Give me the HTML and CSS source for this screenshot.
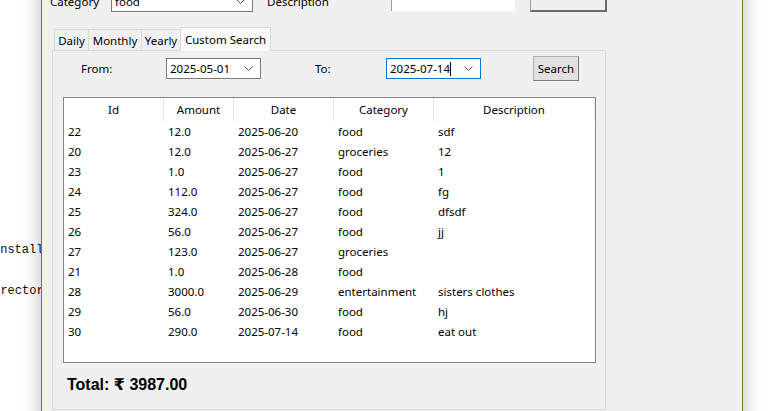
FILE: index.html
```html
<!DOCTYPE html>
<html>
<head>
<meta charset="utf-8">
<link rel="stylesheet" href="styles.css">
</head>
<body>
<div class="desktop">
  <div class="term">
    <div class="tline l1">install</div>
    <div class="tline l2">director</div>
  </div>
  <div class="window">
    <div class="toprow">
      <span class="lbl cat-lbl">Category</span>
      <div class="combo cat-combo"><span class="ctext">food</span><svg class="chev" width="9" height="5" viewBox="0 0 9 5"><polyline points="0.5,0.5 4.5,4.5 8.5,0.5" fill="none" stroke="#5a5a5a" stroke-width="1"/></svg></div>
      <span class="lbl desc-lbl">Description</span>
      <div class="entry"></div>
      <div class="btn-classic"></div>
    </div>
    <div class="tabs">
      <div class="tab t-daily">Daily</div>
      <div class="tab t-monthly">Monthly</div>
      <div class="tab t-yearly">Yearly</div>
      <div class="tab sel t-custom">Custom Search</div>
    </div>
    <div class="pane">
      <div class="controls">
        <span class="lbl from-lbl">From:</span>
        <div class="combo dcombo"><span class="ctext">2025-05-01</span><svg class="chev" width="9" height="5" viewBox="0 0 9 5"><polyline points="0.5,0.5 4.5,4.5 8.5,0.5" fill="none" stroke="#5a5a5a" stroke-width="1"/></svg></div>
        <span class="lbl to-lbl">To:</span>
        <div class="combo dcombo focus"><span class="ctext">2025-07-14</span><span class="caret"></span><svg class="chev" width="9" height="5" viewBox="0 0 9 5"><polyline points="0.5,0.5 4.5,4.5 8.5,0.5" fill="none" stroke="#5a5a5a" stroke-width="1"/></svg></div>
        <div class="btn">Search</div>
      </div>
      <div class="tree">
        <div class="thead">
          <div class="th">Id</div>
          <div class="th">Amount</div>
          <div class="th">Date</div>
          <div class="th">Category</div>
          <div class="th">Description</div>
        </div>
        <div class="tbody">
          <div class="tr"><span>22</span><span>12.0</span><span>2025-06-20</span><span>food</span><span>sdf</span></div>
          <div class="tr"><span>20</span><span>12.0</span><span>2025-06-27</span><span>groceries</span><span>12</span></div>
          <div class="tr"><span>23</span><span>1.0</span><span>2025-06-27</span><span>food</span><span>1</span></div>
          <div class="tr"><span>24</span><span>112.0</span><span>2025-06-27</span><span>food</span><span>fg</span></div>
          <div class="tr"><span>25</span><span>324.0</span><span>2025-06-27</span><span>food</span><span>dfsdf</span></div>
          <div class="tr"><span>26</span><span>56.0</span><span>2025-06-27</span><span>food</span><span>jj</span></div>
          <div class="tr"><span>27</span><span>123.0</span><span>2025-06-27</span><span>groceries</span><span></span></div>
          <div class="tr"><span>21</span><span>1.0</span><span>2025-06-28</span><span>food</span><span></span></div>
          <div class="tr"><span>28</span><span>3000.0</span><span>2025-06-29</span><span>entertainment</span><span>sisters clothes</span></div>
          <div class="tr"><span>29</span><span>56.0</span><span>2025-06-30</span><span>food</span><span>hj</span></div>
          <div class="tr"><span>30</span><span>290.0</span><span>2025-07-14</span><span>food</span><span>eat out</span></div>
        </div>
      </div>
      <div class="total">Total: ₹ 3987.00</div>
    </div>
  </div>
</div>
</body>
</html>
```

FILE: styles.css
```css
html, body {
  margin: 0;
  padding: 0;
  width: 768px;
  height: 411px;
  overflow: hidden;
  background: #ffffff;
}
.desktop {
  position: relative;
  width: 768px;
  height: 411px;
  overflow: hidden;
  background: #ffffff;
  font-family: "Noto Sans", "Open Sans", sans-serif;
  font-size: 11.5px;
  color: #000;
}
.term {
  width: 41px;
  overflow: hidden;
  padding-top: 241px;
  font-family: "Liberation Mono", "DejaVu Sans Mono", monospace;
  font-size: 12px;
  color: #0c0c0c;
  line-height: 18px;
}
.tline { white-space: pre; }
.l1 { margin-left: -7px; }
.l2 { margin-left: -14px; margin-top: 23px; }

.window {
  position: absolute;
  left: 41px;
  top: -20px;
  width: 700px;
  height: 440px;
  background: #f0f0f0;
  border: 1px solid #857537;
  box-shadow: 0 0 18px rgba(0,0,0,0.28);
  padding-top: 10px;
  box-sizing: content-box;
}
.toprow {
  display: flex;
  align-items: center;
  height: 21px;
}
.lbl { white-space: nowrap; }
.cat-lbl { margin-left: 8px; width: 61px; }
.combo {
  position: relative;
  box-sizing: border-box;
  height: 21px;
  background: #fff;
  border: 1px solid #7a7a7a;
  display: flex;
  align-items: center;
  padding-left: 3px;
}
.cat-combo { width: 142px; }
.chev { position: absolute; right: 7px; top: 7px; }
.desc-lbl { margin-left: 14px; width: 124px; }
.entry {
  width: 124px;
  height: 20px;
  margin-top: -1px;
  background: #fff;
  border-left: 1px solid #a0a0a0;
  box-sizing: border-box;
}
.btn-classic {
  margin-left: 15px;
  width: 77px;
  height: 24px;
  margin-top: -3px;
  box-sizing: border-box;
  background: #f0f0f0;
  border: 1px solid #a0a0a0;
  border-right: 2px solid #696969;
  border-bottom: 2px solid #696969;
}
.tabs {
  display: flex;
  align-items: flex-end;
  height: 23px;
  margin-top: 15px;
  margin-left: 12px;
  position: relative;
  z-index: 2;
}
.tab {
  box-sizing: border-box;
  height: 21px;
  border: 1px solid #d9d9d9;
  border-bottom: none;
  background: #f0f0f0;
  display: flex;
  align-items: center;
  justify-content: center;
  padding-top: 1px;
  white-space: nowrap;
}
.tab + .tab { margin-left: -1px; }
.t-daily { width: 35px; }
.t-monthly { width: 54px; }
.t-yearly { width: 40px; }
.t-custom { width: 91px; }
.tab.sel {
  height: 24px;
  margin-bottom: -1px;
  background: #fafafa;
  padding-top: 0;
  padding-bottom: 1px;
}
.pane {
  margin-left: 10px;
  width: 554px;
  height: 360px;
  box-sizing: border-box;
  border: 1px solid #d9d9d9;
  background: #f0f0f0;
  position: relative;
  z-index: 1;
}
.controls {
  display: flex;
  align-items: center;
  height: 25px;
  margin-top: 5px;
  padding-left: 28px;
}
.from-lbl { width: 85px; }
.dcombo { width: 95px; }
.to-lbl { margin-left: 54px; width: 71px; }
.focus { border-color: #0078d7; }
.caret {
  display: inline-block;
  width: 1px;
  height: 14px;
  background: #000;
}
.btn {
  margin-left: 52px;
  width: 46px;
  height: 25px;
  box-sizing: border-box;
  background: #e1e1e1;
  border: 1px solid #adadad;
  border-right-color: #7a7a7a;
  border-bottom-color: #7a7a7a;
  display: flex;
  align-items: center;
  justify-content: center;
}
.tree {
  margin-top: 16px;
  margin-left: 10px;
  width: 533px;
  height: 266px;
  box-sizing: border-box;
  border: 1px solid #828790;
  background: #fff;
}
.thead, .tr {
  display: grid;
  grid-template-columns: 100px 70px 100px 100px 1fr;
}
.thead { height: 23px; }
.th {
  border-right: 1px solid #e5e5e5;
  display: flex;
  align-items: center;
  justify-content: center;
}
.tr { height: 20px; align-items: center; }
.tr span { padding-left: 4px; white-space: nowrap; }
.total {
  margin-top: 12px;
  margin-left: 14px;
  line-height: 20px;
  font-family: "Liberation Sans", "DejaVu Sans", sans-serif;
  font-weight: bold;
  font-size: 16px;
}
```
